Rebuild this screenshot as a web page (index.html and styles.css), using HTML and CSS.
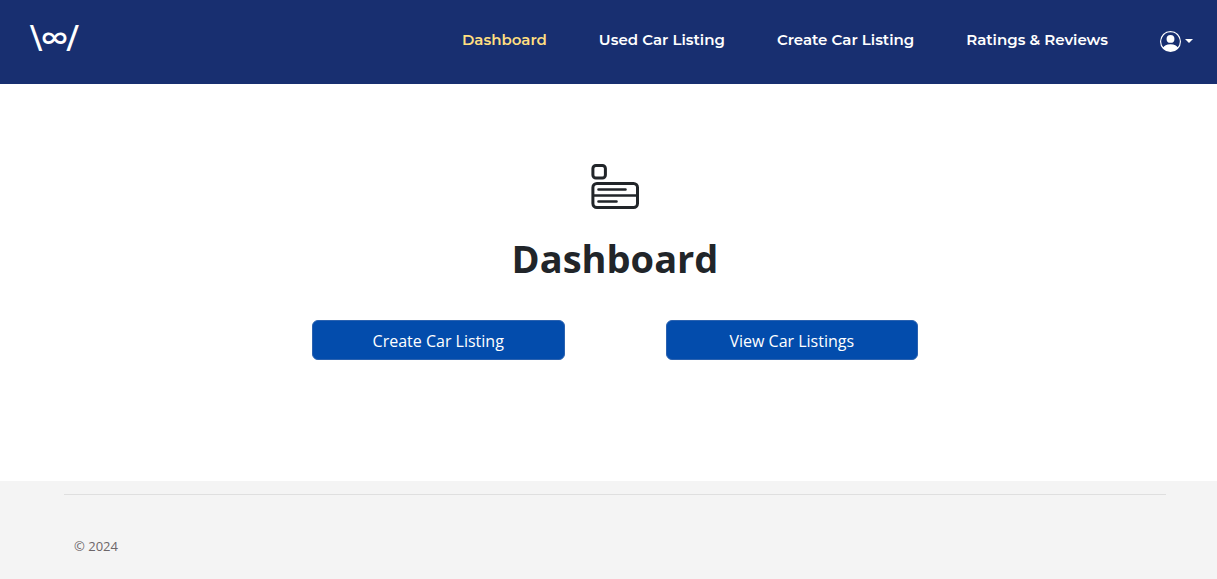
FILE: index.html
```html
<!DOCTYPE html>
<html lang="en">
<head>
<meta charset="utf-8">
<meta name="viewport" content="width=device-width, initial-scale=1">
<title>Dashboard</title>
<link rel="stylesheet" href="styles.css">
</head>
<body>
<header class="navbar">
  <a class="brand" href="#">\∞/</a>
  <nav class="nav-links">
    <a class="nav-link active" href="#">Dashboard</a>
    <a class="nav-link" href="#">Used Car Listing</a>
    <a class="nav-link" href="#">Create Car Listing</a>
    <a class="nav-link" href="#">Ratings &amp; Reviews</a>
    <button class="account" type="button" aria-label="Account menu">
      <svg class="account-icon" viewBox="0 0 16 16" fill="currentColor" aria-hidden="true">
        <path d="M11 6a3 3 0 1 1-6 0 3 3 0 0 1 6 0"/>
        <path fill-rule="evenodd" d="M0 8a8 8 0 1 1 16 0A8 8 0 0 1 0 8m8-7a7 7 0 0 0-5.468 11.37C3.242 11.226 4.805 10 8 10s4.757 1.225 5.468 2.37A7 7 0 0 0 8 1"/>
      </svg>
      <span class="caret"></span>
    </button>
  </nav>
</header>
<main class="main">
  <svg class="hero-icon" viewBox="0 0 48 45" fill="none" stroke="currentColor" stroke-width="3" aria-hidden="true">
    <rect x="1.9" y="1.5" width="12.5" height="12.5" rx="3"/>
    <rect x="1.9" y="19.5" width="44.6" height="24" rx="4"/>
    <path d="M1.9 31.5h44.6" stroke-width="2.6"/>
    <path d="M7.5 25.5h27M7.5 37.5h18" stroke-width="2.6" stroke-linecap="round"/>
  </svg>
  <h1 class="title">Dashboard</h1>
  <div class="actions">
    <button class="btn" type="button">Create Car Listing</button>
    <button class="btn" type="button">View Car Listings</button>
  </div>
</main>
<footer class="footer">
  <div class="footer-inner">
    <p class="copyright">© 2024</p>
  </div>
</footer>
</body>
</html>
```
FILE: styles.css
```css
* { box-sizing: border-box; }

body {
  margin: 0;
  min-height: 100vh;
  display: flex;
  flex-direction: column;
  background: #fff;
  color: #212529;
  font-family: "Segoe UI", "Open Sans", "Noto Sans", sans-serif;
  font-size: 16px;
  line-height: 24px;
}

.navbar {
  display: flex;
  justify-content: space-between;
  align-items: flex-start;
  padding: 20px 24px 24px 31px;
  min-height: 84px;
  background: #182f70;
  font-family: Montserrat, Inter, sans-serif;
  font-weight: 600;
}

.brand {
  color: #fff;
  font-size: 28px;
  line-height: 36px;
  text-decoration: none;
}

.nav-links {
  display: flex;
  align-items: center;
  gap: 52px;
  line-height: 40px;
}

.nav-link {
  color: #fff;
  font-size: 15px;
  text-decoration: none;
}

.nav-link.active { color: #ffdf80; }

.account {
  display: flex;
  align-items: center;
  gap: 4px;
  padding: 2px 0 0;
  border: 0;
  background: none;
  color: #fff;
}

.account-icon {
  width: 21px;
  height: 21px;
}

.caret {
  border: 4px solid transparent;
  border-top-color: currentColor;
  border-bottom: 0;
}

.main {
  flex: 1;
  display: flex;
  flex-direction: column;
  align-items: center;
  padding: 80px 51px 48px 64px;
}

.hero-icon {
  width: 48px;
  height: 45px;
}

.title {
  margin: 23px 0 36px;
  font-size: 38px;
  font-weight: 700;
  line-height: 52px;
}

.actions {
  display: grid;
  grid-template-columns: 1fr 1fr;
  gap: 101px;
  width: 55%;
}

.btn {
  padding: 8px 12px 6px;
  border: 1px solid #2b62b0;
  border-radius: 6px;
  background: #034cac;
  color: #fff;
  font: inherit;
}

.footer {
  padding: 13px 51px 21px 64px;
  background: #f4f4f4;
}

.footer-inner {
  padding: 39px 10px 0;
  border-top: 1px solid #dfdfdf;
}

.copyright {
  margin: 0;
  color: #6c6669;
  font-size: 13px;
}
```
